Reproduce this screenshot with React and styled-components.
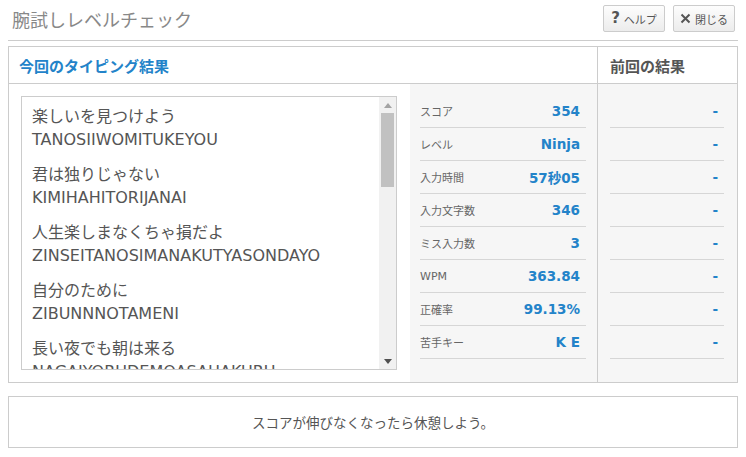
import React from 'react';
import styled, { createGlobalStyle } from 'styled-components';

const JP = `"Noto Sans CJK JP", sans-serif`;
const MIX = `"DejaVu Sans", "Noto Sans CJK JP", sans-serif`;
const BLUE = '#2383c9';

const GlobalStyle = createGlobalStyle`
  html, body {
    margin: 0;
    padding: 0;
    background: #fff;
  }
  body {
    font-family: ${MIX};
  }
  * {
    box-sizing: border-box;
  }
`;

const Page = styled.div`
  width: 746px;
  padding: 0 8px;
`;

const TopBar = styled.header`
  height: 41px;
  display: flex;
  align-items: center;
  justify-content: space-between;
  padding: 0 3px 3px 4px;
  border-bottom: 1px solid #ccc;
`;

const Title = styled.h1`
  margin: 0;
  font-family: ${JP};
  font-size: 18px;
  font-weight: 400;
  color: #888;
`;

const Buttons = styled.div`
  display: flex;
  gap: 8px;
`;

const ToolButton = styled.button`
  width: 62px;
  height: 27px;
  display: flex;
  align-items: center;
  justify-content: center;
  gap: 4px;
  padding: 0;
  border: 1px solid #ccc;
  border-radius: 2px;
  background: linear-gradient(#fdfdfd, #ececec);
  font-family: ${JP};
  font-size: 11px;
  color: #555;
`;

const Question = styled.span`
  font-family: "DejaVu Sans", sans-serif;
  font-size: 15px;
  font-weight: 700;
  color: #555;
  line-height: 1;
`;

const Panel = styled.section`
  margin-top: 5px;
  height: 337px;
  display: flex;
  border: 1px solid #ccc;
`;

const Column = styled.div`
  display: flex;
  flex-direction: column;
  min-height: 0;
  flex: ${(p) => (p.$grow ? 1 : 'none')};
  width: ${(p) => (p.$grow ? 'auto' : '140px')};
  border-left: ${(p) => (p.$grow ? 'none' : '1px solid #ccc')};
`;

const Head = styled.div`
  flex: none;
  height: 37px;
  display: flex;
  align-items: center;
  padding: 0 ${(p) => (p.$muted ? 12 : 10)}px;
  border-bottom: 1px solid #ccc;
  font-family: ${JP};
  font-size: 15px;
  font-weight: 700;
  color: ${(p) => (p.$muted ? '#555' : BLUE)};
  background: #fff;
`;

const Body = styled.div`
  flex: 1;
  min-height: 0;
  display: flex;
`;

const TextPane = styled.div`
  width: 401px;
  display: flex;
  padding: 12px 13px 12px 12px;
  background: #fff;
`;

const TextBox = styled.div`
  flex: 1;
  min-height: 0;
  display: flex;
  border: 1px solid #ccc;
  background: #fff;
`;

const Lines = styled.div`
  flex: 1;
  min-height: 0;
  overflow: hidden;
  padding: 9px 10px;
`;

const Entry = styled.div`
  margin-bottom: 13px;
  font-size: 16px;
  line-height: 22.5px;
  color: #555;
  white-space: nowrap;
`;

const Scroll = styled.div`
  width: 17px;
  display: flex;
  flex-direction: column;
  background: #f1f1f1;
`;

const Arrow = styled.div`
  height: 16px;
  display: flex;
  align-items: center;
  justify-content: center;
`;

const Thumb = styled.div`
  height: 74px;
  margin: 0 2px;
  background: #c1c1c1;
`;

const Track = styled.div`
  flex: 1;
`;

const Stats = styled.div`
  flex: 1;
  background: #f6f6f6;
  padding: ${(p) => (p.$prev ? '11px 13px 0 12px' : '11px 11px 0 10px')};
`;

const StatRow = styled.div`
  height: 33px;
  display: flex;
  align-items: center;
  justify-content: space-between;
  padding-right: 6px;
  border-bottom: 1px solid #d6d6d6;
`;

const Label = styled.span`
  font-family: ${MIX};
  font-size: 11px;
  color: #666;
`;

const Value = styled.span`
  margin-left: auto;
  font-family: ${MIX};
  font-size: 13.5px;
  font-weight: 700;
  color: ${BLUE};
`;

const Footer = styled.footer`
  margin-top: 13px;
  height: 52px;
  display: flex;
  align-items: center;
  justify-content: center;
  border: 1px solid #ccc;
  font-family: ${JP};
  font-size: 13.5px;
  color: #555;
`;

const entries = [
  ['楽しいを見つけよう', 'TANOSIIWOMITUKEYOU'],
  ['君は独りじゃない', 'KIMIHAHITORIJANAI'],
  ['人生楽しまなくちゃ損だよ', 'ZINSEITANOSIMANAKUTYASONDAYO'],
  ['自分のために', 'ZIBUNNNOTAMENI'],
  ['長い夜でも朝は来る', 'NAGAIYORUDEMOASAHAKURU'],
];

const stats = [
  ['スコア', '354'],
  ['レベル', 'Ninja'],
  ['入力時間', '57秒05'],
  ['入力文字数', '346'],
  ['ミス入力数', '3'],
  ['WPM', '363.84'],
  ['正確率', '99.13%'],
  ['苦手キー', 'K E'],
];

const Triangle = ({ down }) => (
  <svg width="8" height="5" viewBox="0 0 8 5">
    <path d={down ? 'M0 0H8L4 5Z' : 'M0 5H8L4 0Z'} fill={down ? '#505050' : '#a3a3a3'} />
  </svg>
);

const CloseIcon = () => (
  <svg width="11" height="11" viewBox="0 0 11 11">
    <path d="M1.5 1.5L9.5 9.5M9.5 1.5L1.5 9.5" stroke="#555" strokeWidth="2" />
  </svg>
);

export default function App() {
  return (
    <Page>
      <GlobalStyle />
      <TopBar>
        <Title>腕試しレベルチェック</Title>
        <Buttons>
          <ToolButton>
            <Question>?</Question>
            ヘルプ
          </ToolButton>
          <ToolButton>
            <CloseIcon />
            閉じる
          </ToolButton>
        </Buttons>
      </TopBar>

      <Panel>
        <Column $grow>
          <Head>今回のタイピング結果</Head>
          <Body>
            <TextPane>
              <TextBox>
                <Lines>
                  {entries.map(([jp, roma]) => (
                    <Entry key={roma}>
                      <div>{jp}</div>
                      <div>{roma}</div>
                    </Entry>
                  ))}
                </Lines>
                <Scroll>
                  <Arrow><Triangle /></Arrow>
                  <Thumb />
                  <Track />
                  <Arrow><Triangle down /></Arrow>
                </Scroll>
              </TextBox>
            </TextPane>
            <Stats>
              {stats.map(([label, value]) => (
                <StatRow key={label}>
                  <Label>{label}</Label>
                  <Value>{value}</Value>
                </StatRow>
              ))}
            </Stats>
          </Body>
        </Column>
        <Column>
          <Head $muted>前回の結果</Head>
          <Body>
            <Stats $prev>
              {stats.map(([label]) => (
                <StatRow key={label}>
                  <Value>-</Value>
                </StatRow>
              ))}
            </Stats>
          </Body>
        </Column>
      </Panel>

      <Footer>スコアが伸びなくなったら休憩しよう。</Footer>
    </Page>
  );
}
